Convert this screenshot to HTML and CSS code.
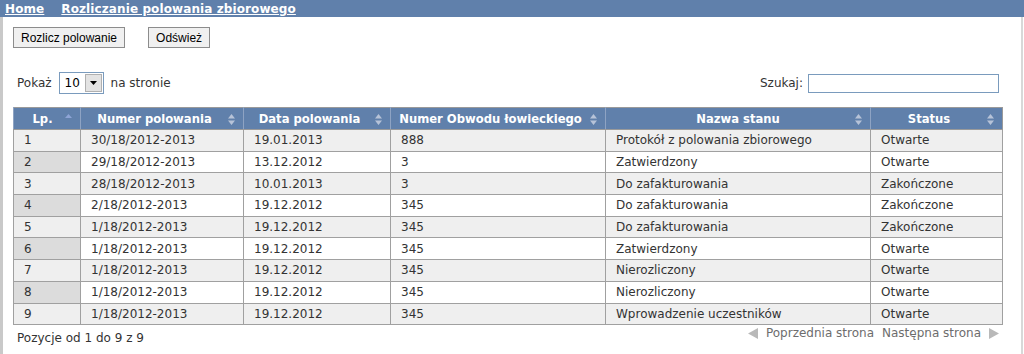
FILE: index.html
```html
<!DOCTYPE html>
<html lang="pl">
<head>
<meta charset="utf-8">
<title>Rozliczanie polowania zbiorowego</title>
<link rel="stylesheet" href="styles.css">
</head>
<body>
<div class="titlebar">
  <a href="#" class="crumb">Home</a>
  <a href="#" class="crumb">Rozliczanie polowania zbiorowego</a>
</div>
<div class="main">
  <div class="actions">
    <button class="btn">Rozlicz polowanie</button>
    <button class="btn">Odśwież</button>
  </div>
  <div class="controls">
    <div class="length">
      <span>Pokaż</span>
      <span class="select"><span class="select-val">10</span><span class="select-btn"><svg width="7" height="4" viewBox="0 0 7 4"><path d="M0 0H7L3.5 4Z" fill="#000"/></svg></span></span>
      <span>na stronie</span>
    </div>
    <label class="search">Szukaj: <input type="text" class="search-input"></label>
  </div>
  <table class="grid">
    <colgroup>
      <col class="c1"><col class="c2"><col class="c3"><col class="c4"><col class="c5"><col class="c6">
    </colgroup>
    <thead>
      <tr>
        <th class="th-lp">Lp.<svg class="sort" width="7" height="11" viewBox="0 0 7 11"><path d="M0 4H7L3.5 0Z" fill="#8ea4d6"/></svg></th>
        <th>Numer polowania<svg class="sort" width="7" height="11" viewBox="0 0 7 11"><path d="M0 4.5H7L3.5 0Z M0 6.5H7L3.5 11Z" fill="#b7c3d8"/></svg></th>
        <th>Data polowania<svg class="sort" width="7" height="11" viewBox="0 0 7 11"><path d="M0 4.5H7L3.5 0Z M0 6.5H7L3.5 11Z" fill="#b7c3d8"/></svg></th>
        <th>Numer Obwodu łowieckiego<svg class="sort" width="7" height="11" viewBox="0 0 7 11"><path d="M0 4.5H7L3.5 0Z M0 6.5H7L3.5 11Z" fill="#b7c3d8"/></svg></th>
        <th class="th-c">Nazwa stanu<svg class="sort" width="7" height="11" viewBox="0 0 7 11"><path d="M0 4.5H7L3.5 0Z M0 6.5H7L3.5 11Z" fill="#b7c3d8"/></svg></th>
        <th>Status<svg class="sort" width="7" height="11" viewBox="0 0 7 11"><path d="M0 4.5H7L3.5 0Z M0 6.5H7L3.5 11Z" fill="#b7c3d8"/></svg></th>
      </tr>
    </thead>
    <tbody>
      <tr class="odd"><td>1</td><td>30/18/2012-2013</td><td>19.01.2013</td><td>888</td><td>Protokół z polowania zbiorowego</td><td>Otwarte</td></tr>
      <tr class="even"><td>2</td><td>29/18/2012-2013</td><td>13.12.2012</td><td>3</td><td>Zatwierdzony</td><td>Otwarte</td></tr>
      <tr class="odd"><td>3</td><td>28/18/2012-2013</td><td>10.01.2013</td><td>3</td><td>Do zafakturowania</td><td>Zakończone</td></tr>
      <tr class="even"><td>4</td><td>2/18/2012-2013</td><td>19.12.2012</td><td>345</td><td>Do zafakturowania</td><td>Zakończone</td></tr>
      <tr class="odd"><td>5</td><td>1/18/2012-2013</td><td>19.12.2012</td><td>345</td><td>Do zafakturowania</td><td>Zakończone</td></tr>
      <tr class="even"><td>6</td><td>1/18/2012-2013</td><td>19.12.2012</td><td>345</td><td>Zatwierdzony</td><td>Otwarte</td></tr>
      <tr class="odd"><td>7</td><td>1/18/2012-2013</td><td>19.12.2012</td><td>345</td><td>Nierozliczony</td><td>Otwarte</td></tr>
      <tr class="even"><td>8</td><td>1/18/2012-2013</td><td>19.12.2012</td><td>345</td><td>Nierozliczony</td><td>Otwarte</td></tr>
      <tr class="odd"><td>9</td><td>1/18/2012-2013</td><td>19.12.2012</td><td>345</td><td>Wprowadzenie uczestników</td><td>Otwarte</td></tr>
    </tbody>
  </table>
  <div class="footer">
    <div class="info">Pozycje od 1 do 9 z 9</div>
    <div class="paging">
      <svg class="arrow" width="10" height="11" viewBox="0 0 10 11"><path d="M10 0V11L0 5.5Z" fill="#b9b9b9"/></svg>
      <span class="page-link">Poprzednia strona</span>
      <span class="page-link">Następna strona</span>
      <svg class="arrow" width="10" height="11" viewBox="0 0 10 11"><path d="M0 0V11L10 5.5Z" fill="#b9b9b9"/></svg>
    </div>
  </div>
</div>
</body>
</html>
```

FILE: styles.css
```css
html, body {
  margin: 0;
  padding: 0;
  background: #fff;
}
body {
  font-family: "DejaVu Sans", Verdana, sans-serif;
  font-size: 12px;
  color: #333;
  height: 354px;
  overflow: hidden;
}
.titlebar {
  height: 17px;
  background: #6080ab;
  display: flex;
  align-items: center;
  gap: 17px;
  padding-left: 5px;
}
.crumb {
  color: #fff;
  font-weight: bold;
  font-size: 12px;
  text-decoration: underline;
  letter-spacing: 0.1px;
}
.main {
  border-left: 3px solid #c9c9c9;
  border-right: 2px solid #d8d8d8;
  width: 1023px;
  height: 337px;
  padding-left: 10px;
  box-sizing: border-box;
}
.actions {
  display: flex;
  gap: 23px;
  padding-top: 10px;
}
.btn {
  font-family: "Liberation Sans", Arial, sans-serif;
  font-size: 12px;
  color: #000;
  background: #f0f0f0;
  border: 1px solid #8c8c8c;
  height: 21px;
  padding: 0 7px;
  border-radius: 0;
}
.controls {
  display: flex;
  justify-content: space-between;
  align-items: center;
  margin-top: 24px;
  width: 986px;
  box-sizing: border-box;
  height: 22px;
  padding-left: 4px;
}
.length {
  display: flex;
  align-items: center;
  gap: 7px;
}
.select {
  display: flex;
  align-items: stretch;
  width: 45px;
  height: 22px;
  box-sizing: border-box;
  border: 1px solid #7a9bbd;
  background: #fff;
}
.select-val {
  flex: 1;
  padding-left: 5px;
  line-height: 20px;
  color: #000;
}
.select-btn {
  width: 15px;
  margin: 1px;
  background: #e3e3e3;
  border: 1px solid #b0b0b0;
  display: flex;
  align-items: center;
  justify-content: center;
}
.search {
  display: flex;
  align-items: center;
  gap: 5px;
}
.search-input {
  width: 191px;
  height: 19px;
  box-sizing: border-box;
  border: 1px solid #7a9bbd;
  margin: 0;
  padding: 0;
}
.grid {
  margin-top: 13px;
  width: 989px;
  border-collapse: collapse;
  table-layout: fixed;
  border: 1px solid #9a9a9a;
}
.c1 { width: 67px; }
.c2 { width: 163px; }
.c3 { width: 147px; }
.c4 { width: 215px; }
.c5 { width: 265px; }
.c6 { width: 132px; }
.grid th {
  position: relative;
  background: #6080ab;
  color: #fff;
  font-weight: bold;
  font-size: 11.6px;
  height: 21px;
  padding: 0 18px 0 3px;
  text-align: center;
  white-space: nowrap;
  border-left: 1px solid #8ea3c3;
  border-bottom: 1px solid #9a9a9a;
}
.grid th.th-lp {
  padding: 0 12px 0 3px;
}
.grid th.th-c {
  padding: 0 10px;
}
.sort {
  position: absolute;
  right: 8px;
  top: 50%;
  margin-top: -5px;
}
.grid td {
  border: 1px solid #a0a0a0;
  padding: 0 0 0 10px;
  height: 20.7px;
  line-height: 14px;
  white-space: nowrap;
  color: #333;
}
.grid tr.odd td { background: #efefef; }
.grid tr.even td { background: #fff; }
.grid tr.even td:first-child { background: #dcdcdc; }
.footer {
  display: flex;
  justify-content: space-between;
  width: 989px;
}
.info {
  padding-top: 6px;
  padding-left: 4px;
}
.paging {
  display: flex;
  align-items: center;
  gap: 8px;
  padding-top: 1px;
  height: 14px;
  color: #6d6d6d;
  padding-right: 3px;
}
.page-link { color: #6d6d6d; }
```
